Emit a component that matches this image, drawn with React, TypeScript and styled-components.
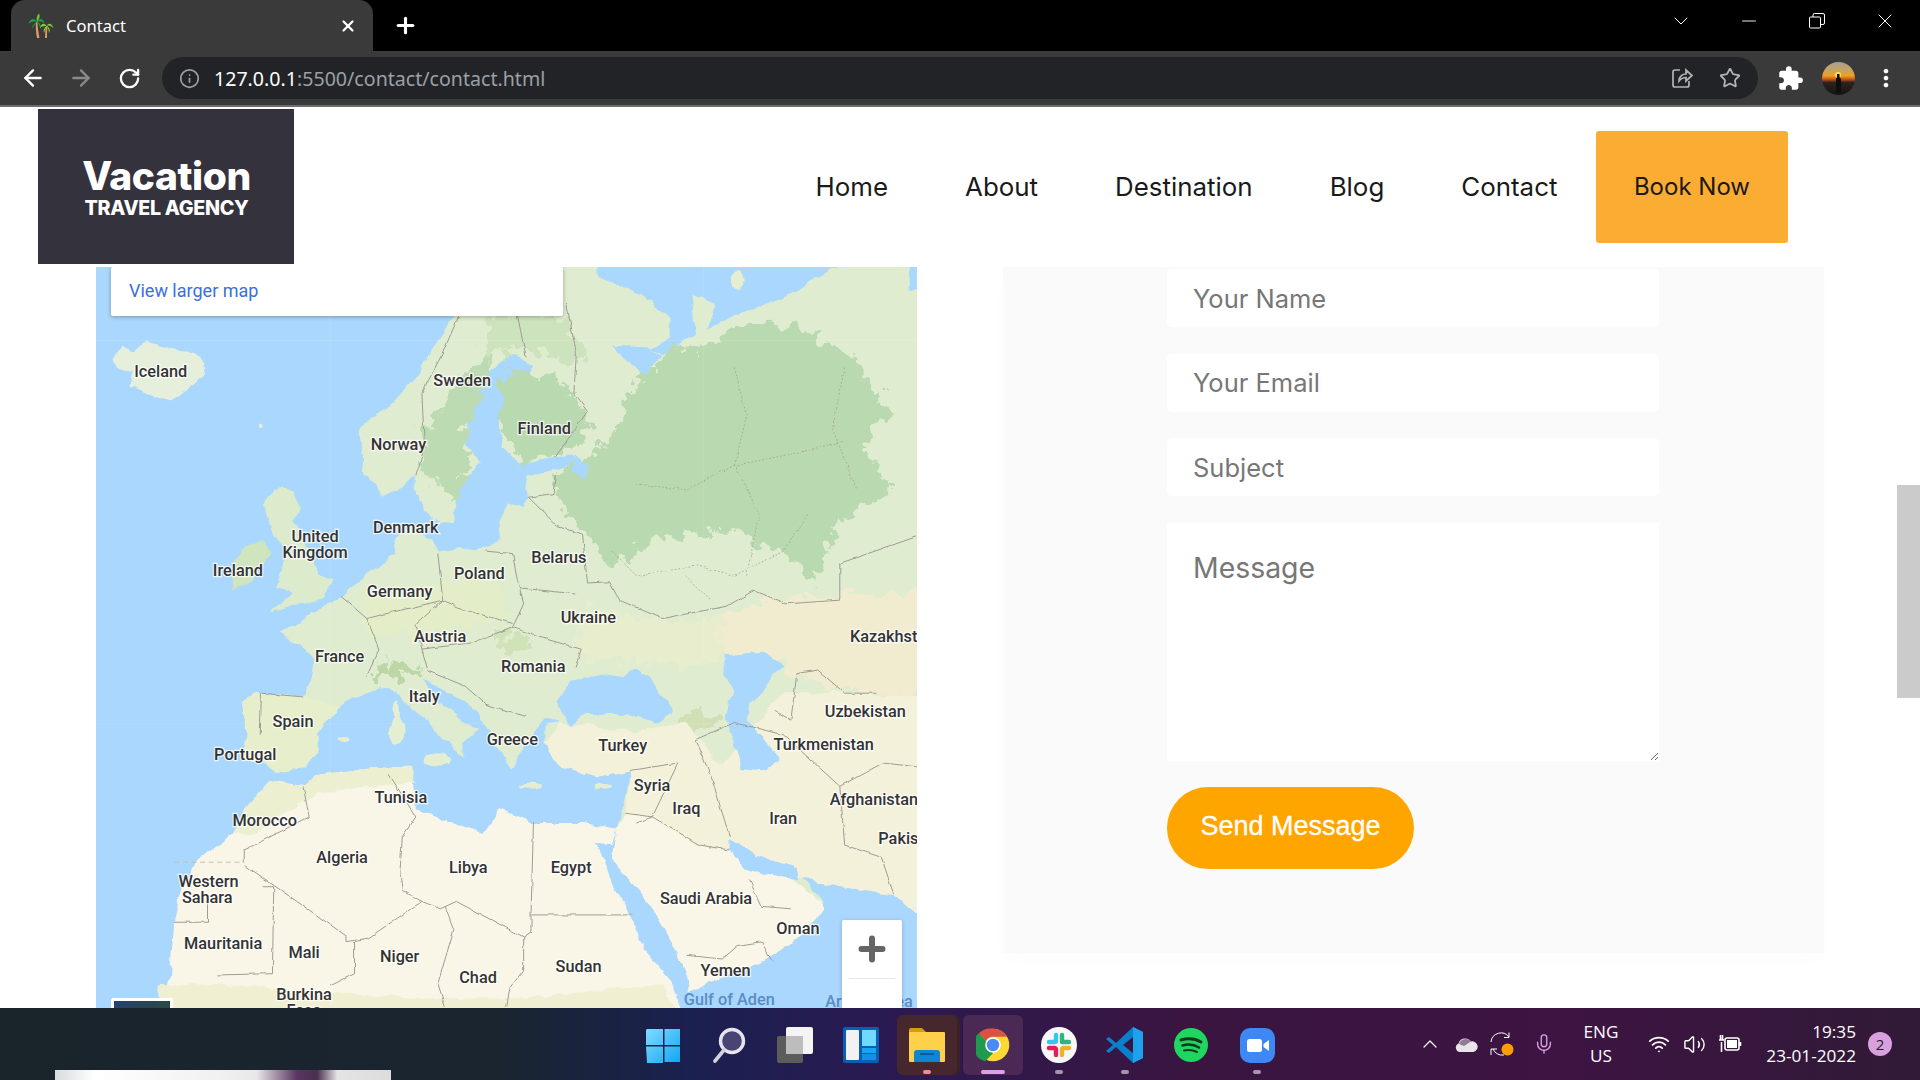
import React from "react";
import styled, { createGlobalStyle } from "styled-components";
import { ArrowLeft, ArrowRight, RotateCw, Info, Star, X, Plus, ChevronDown, ChevronUp, Minus, Mic, Wifi, Volume2 } from "lucide-react";
import { MdExtension, MdMoreVert } from "react-icons/md";

const GlobalStyle = createGlobalStyle`
  html, body {
    margin: 0;
    padding: 0;
    height: 100%;
    overflow: hidden;
    background: #fff;
  }
  * { box-sizing: border-box; }
`;

const Screen = styled.div`
  display: flex;
  flex-direction: column;
  width: 1920px;
  height: 1080px;
  overflow: hidden;
`;

/* browser chrome */
const TabStrip = styled.div`
  display: flex;
  align-items: flex-start;
  height: 51px;
  padding-left: 11px;
  background: #000;
  color: #fff;
`;

const Tab = styled.div`
  display: flex;
  align-items: center;
  width: 362px;
  height: 51px;
  padding: 0 16px 0 17px;
  gap: 12px;
  background: #3a3a3a;
  border-radius: 14px 14px 0 0;
  font: 400 16.6px "Noto Sans", sans-serif;
`;

const TabTitle = styled.span`
  flex: 1;
`;

const NewTab = styled.div`
  display: flex;
  align-items: center;
  height: 51px;
  margin-left: 20px;
`;

const WindowControls = styled.div`
  display: flex;
  margin-left: auto;
  padding-right: 1px;
`;

const WindowButton = styled.div`
  display: flex;
  align-items: center;
  justify-content: center;
  width: 68px;
  height: 42px;
`;

const Toolbar = styled.div`
  display: flex;
  align-items: center;
  height: 56px;
  padding-left: 9px;
  background: #3a3a3a;
  border-bottom: 2px solid #6d6d6d;
  color: #fff;
`;

const ToolButton = styled.div<{ $dim?: boolean }>`
  display: flex;
  align-items: center;
  justify-content: center;
  width: 48px;
  height: 40px;
  color: ${(p) => (p.$dim ? "#8a8a8a" : "#fff")};
`;

const Omnibox = styled.div`
  display: flex;
  align-items: center;
  flex: 0 0 1596px;
  height: 42px;
  margin: 0 8px 0 9px;
  padding: 0 4px 0 17px;
  border-radius: 21px;
  background: #222326;
  color: #9aa0a6;
  font: 400 19.6px "Noto Sans", sans-serif;
`;

const UrlText = styled.span`
  flex: 1;
  margin-left: 14px;
`;

const UrlHost = styled.span`
  color: #fff;
`;

const OmniAction = styled.div`
  display: flex;
  align-items: center;
  justify-content: center;
  width: 48px;
  color: #b4b4b4;
`;

/* page */
const Viewport = styled.div`
  position: relative;
  flex: 1;
  overflow: hidden;
  background: #fff;
`;

const Header = styled.header`
  display: flex;
  align-items: flex-start;
  height: 160px;
  padding: 2px 132px 0 38px;
`;

const Logo = styled.div`
  display: flex;
  flex-direction: column;
  align-items: center;
  justify-content: center;
  width: 256px;
  height: 155px;
  padding: 3px 0 0 1px;
  background: #34323d;
  color: #fff;
  font-family: Inter, sans-serif;
`;

const LogoTitle = styled.div`
  font-size: 39px;
  font-weight: 800;
  line-height: 40px;
  letter-spacing: -0.4px;
`;

const LogoSub = styled.div`
  font-size: 19.7px;
  font-weight: 800;
  line-height: 24px;
  letter-spacing: -0.3px;
`;

const Nav = styled.nav`
  display: flex;
  align-items: center;
  height: 111px;
  margin: 22px 0 0 auto;
  font: 400 25.9px Inter, sans-serif;
  color: #1a1a1a;
`;

const NavLink = styled.a`
  padding: 0 38.5px;
`;

const BookNow = styled.a`
  display: flex;
  align-items: center;
  height: 112px;
  padding: 0 38px;
  border-radius: 3px;
  background: #fbac33;
  font-size: 24px;
`;

const Content = styled.main`
  display: flex;
  align-items: flex-start;
  padding-left: 96px;
`;

const MapFrame = styled.div`
  position: relative;
  flex: 0 0 821px;
  height: 741px;
  overflow: hidden;
  background: #a9d7fe;
`;

const MapSvg = styled.svg`
  display: block;
  width: 821px;
  height: 741px;
`;

const MapLabel = styled.text<{ $sea?: boolean }>`
  font: 500 13.3px Roboto, sans-serif;
  text-anchor: middle;
  dominant-baseline: central;
  fill: ${(p) => (p.$sea ? "#5b8cc4" : "#333")};
  stroke: ${(p) => (p.$sea ? "none" : "rgba(255,255,255,0.8)")};
  stroke-width: 2px;
  paint-order: stroke;
`;

const MapCard = styled.div`
  position: absolute;
  top: 0;
  left: 15px;
  display: flex;
  align-items: center;
  width: 452px;
  height: 49px;
  padding: 0 0 3px 18px;
  border-radius: 2px;
  background: #fff;
  box-shadow: 0 1px 4px rgba(0, 0, 0, 0.3);
  color: #3a6fe0;
  font: 400 18px Roboto, sans-serif;
`;

const ZoomControl = styled.div`
  position: absolute;
  top: 653px;
  right: 15px;
  width: 60px;
  height: 120px;
  border-radius: 2px;
  background: #fff;
  box-shadow: 0 1px 4px rgba(0, 0, 0, 0.2);
  color: #666;
`;

const ZoomPlus = styled.div`
  display: flex;
  align-items: center;
  justify-content: center;
  height: 59px;
  margin: 0 7px;
  border-bottom: 1px solid #e6e6e6;
`;

const LayerThumb = styled.div`
  position: absolute;
  top: 731px;
  left: 15px;
  width: 62px;
  height: 62px;
  border: 3px solid #fff;
  border-radius: 2px;
  background: linear-gradient(100deg, #25406e, #2c4a3c);
`;

const FormPanel = styled.section`
  flex: 0 0 821px;
  height: 686px;
  margin-left: 86px;
  padding: 2px 165px 0 164px;
  background: #fafafa;
  box-shadow: 0 8px 20px rgba(0, 0, 0, 0.01);
`;

const ContactForm = styled.form`
  display: flex;
  flex-direction: column;
  align-items: flex-start;
`;

const TextInput = styled.input`
  width: 100%;
  height: 58px;
  margin-bottom: 26.5px;
  padding: 0 26px;
  border: none;
  border-radius: 5px;
  outline: none;
  background: #fff;
  font: 400 25.5px Inter, sans-serif;
  &::placeholder {
    color: #777;
    opacity: 1;
  }
`;

const MessageInput = styled.textarea`
  display: block;
  width: 100%;
  height: 238px;
  margin-bottom: 26px;
  padding: 27px 26px;
  border: none;
  outline: none;
  background: #fff;
  font: 400 28.4px Inter, sans-serif;
  &::placeholder {
    color: #777;
    opacity: 1;
  }
`;

const SendButton = styled.button`
  width: 247px;
  height: 82px;
  padding-bottom: 3px;
  border: none;
  border-radius: 41px;
  background: #ffa500;
  color: #fff;
  font: 400 27px "Liberation Sans", sans-serif;
  -webkit-text-stroke: 0.3px #fff;
`;

const ScrollThumb = styled.div`
  position: absolute;
  top: 378px;
  right: 0;
  width: 23px;
  height: 213px;
  background: #cbcbcb;
`;

/* windows taskbar */
const Taskbar = styled.footer`
  position: relative;
  display: flex;
  align-items: center;
  height: 72px;
  padding-left: 630px;
  background: linear-gradient(90deg, #19242b 0%, #1a2530 26%, #1a2050 36%, #2a1a52 46%, #3a1540 62%, #3d1442 82%, #301a36 100%);
  color: #fff;
`;

const Webcam = styled.div`
  position: absolute;
  left: 55px;
  bottom: 0;
  width: 336px;
  height: 10px;
  background: linear-gradient(90deg, #d8dcdc 0%, #fff 12%, #f0f0f0 50%, #e8e8e8 60%, #5a3560 72%, #4a3050 78%, #e4e4e4 84%, #dcdcdc 100%);
`;

const TaskSlot = styled.div<{ $bg?: string; $stacked?: boolean }>`
  position: relative;
  display: flex;
  align-items: center;
  justify-content: center;
  width: 60px;
  height: 60px;
  margin: 2px 3px 0;
  border-radius: 6px;
  background: ${(p) => p.$bg || "transparent"};
  box-shadow: ${(p) => (p.$stacked ? "3px 0 0 #3a2326" : "none")};
`;

const RunDot = styled.span<{ $color: string; $wide?: boolean }>`
  position: absolute;
  bottom: 1px;
  left: 50%;
  width: ${(p) => (p.$wide ? "24px" : "8px")};
  height: 4px;
  margin-left: ${(p) => (p.$wide ? "-12px" : "-4px")};
  border-radius: 2px;
  background: ${(p) => p.$color};
`;

const Tray = styled.div`
  display: flex;
  align-items: center;
  height: 100%;
  margin-left: auto;
  padding-right: 28px;
  font: 400 17.2px "Open Sans", sans-serif;
`;

const TrayIcon = styled.div<{ $gap?: number }>`
  display: flex;
  align-items: center;
  justify-content: center;
  width: 24px;
  margin-right: ${(p) => p.$gap ?? 12}px;
`;

const Lang = styled.div`
  width: 46px;
  margin: 0 23px 0 22px;
  text-align: center;
  line-height: 24px;
`;

const Clock = styled.div`
  width: 100px;
  margin-left: 14px;
  text-align: right;
  line-height: 24px;
`;

const Badge = styled.div`
  display: flex;
  align-items: center;
  justify-content: center;
  width: 24px;
  height: 24px;
  margin-left: 12px;
  border-radius: 50%;
  background: #d9a0e0;
  color: #222;
  font-size: 15px;
`;

/* map data, in the coordinates of the viewBox */
const eurasia =
  "M400,240 L458,205 489,205 489,226 524,240 548,259 548,275 533,284 540,290 555,280 568,275 565,240 585,248 577,270 598,259 642,242 681,219 743,210 743,237 765,231 765,760 730,730 686,724 655,716 675,742 646,770 620,787 568,807 562,811 561,798 550,770 528,735 500,700 504,675 511,653 515,629 489,634 458,626 445,607 445,595 458,588 445,588 428,610 419,629 397,593 380,572 345,555 353,569 392,597 378,606 378,618 362,604 336,576 318,563 310,562 288,569 279,577 259,599 262,612 248,626 224,633 213,621 199,621 202,599 198,574 209,566 248,569 251,566 257,539 253,534 229,517 248,505 279,487 297,471 312,460 325,452 323,438 335,430 353,440 358,452 397,446 410,441 408,427 415,411 428,414 432,389 454,384 476,378 467,373 454,373 423,378 410,365 408,340 423,313 436,299 419,289 401,302 384,329 380,359 393,378 375,397 371,427 353,425 340,403 340,389 331,397 314,406 297,387 294,348 318,332 340,308 358,278 371,258 Z";
const africa =
  "M222,637 L248,642 257,634 305,627 336,626 340,661 371,672 395,682 410,661 437,672 476,672 500,676 504,675 500,690 487,689 504,730 520,757 528,776 548,800 561,835 130,835 139,800 143,751 148,730 161,702 192,680 200,662 Z";
const greatBritain = "M224,398 240,400 246,414 240,425 250,445 262,468 272,474 266,487 222,500 240,485 226,479 235,452 222,433 216,411 Z";
const ireland = "M200,446 216,441 222,453 205,474 189,482 192,457 Z";
const iceland = "M93,292 100,283 108,287 120,280 145,285 165,292 168,305 155,318 140,327 125,322 108,315 110,305 95,300 Z";
const russiaForest =
  "M610,262 650,268 700,290 726,335 706,365 728,403 684,428 664,476 646,456 598,432 528,442 502,462 462,418 452,387 480,372 505,350 512,322 545,288 585,280 Z";
const swedenForest = "M345,360 365,325 385,300 395,290 410,270 395,320 380,350 385,375 370,410 355,395 345,380 Z";
const finlandForest = "M412,302 450,305 474,328 482,350 462,370 425,378 408,345 Z";
const norwayForest = "M400,258 440,258 465,262 480,290 470,300 440,285 415,285 395,295 Z";
const steppe = "M590,505 616,490 695,485 765,482 765,570 690,566 640,545 590,535 Z";
const southSteppe = "M480,495 530,505 590,505 590,535 560,545 520,540 470,535 Z";
const centralEurope = "M290,490 340,478 400,470 420,500 380,512 330,520 300,515 Z";
const middleEast =
  "M445,607 458,590 520,597 560,590 590,625 640,565 690,566 765,570 765,760 730,730 686,724 655,716 625,713 596,694 572,690 533,667 511,664 515,629 489,634 458,626 Z";
const arabia = "M511,664 533,667 572,690 596,694 625,713 646,716 675,742 646,770 620,787 568,807 562,811 561,798 550,770 528,735 500,700 504,675 Z";
const iberia = "M198,574 209,566 248,569 279,577 259,599 262,612 248,626 224,633 213,621 199,621 202,599 Z";
const sahel = "M130,806 180,803 230,808 290,812 350,815 420,815 480,810 540,804 561,835 130,835 Z";
const maghreb = "M200,662 222,637 248,642 257,634 305,627 336,626 340,640 300,642 262,646 235,662 205,682 192,680 Z";
const blackSea = "M454,574 467,555 493,550 510,553 520,545 533,556 550,580 537,591 511,583 480,583 467,591 Z";
const caspian = "M592,535 625,532 640,545 625,560 612,575 610,590 622,600 636,620 625,630 605,628 600,605 592,585 600,565 592,550 Z";
const persianGulf = "M596,685 616,698 651,709 653,719 625,713 607,708 596,694 Z";
const whiteSea = "M500,282 533,284 540,292 528,306 515,296 Z";
const lakes = "M470,372 482,380 478,392 468,385 Z";

const islands: [number, number, number, number][] = [
  [324, 597, 6, 11],
  [324, 580, 3, 7],
  [358, 620, 10, 5],
  [434, 642, 9, 2],
  [493, 642, 7, 2],
  [281, 603, 4, 2],
  [603, 229, 6, 6],
  [213, 347, 2, 2],
];

const borders = [
  "M375,258 362,288 345,321 347,365 340,389",
  "M423,258 430,291",
  "M463,248 471,288 469,321 480,336 454,373",
  "M454,386 452,403 432,406 456,430 476,436 480,476 498,475 506,490 541,505 594,495 616,482 642,493 686,490 686,460 749,438",
  "M397,450 419,452 423,474 428,493 419,512",
  "M358,452 362,490 380,498 419,509",
  "M425,480 471,485",
  "M362,490 340,510 345,530 385,525 419,512",
  "M279,487 300,505 320,500 362,490",
  "M419,512 440,520 475,530 470,545",
  "M300,505 310,530 300,552",
  "M345,530 350,548 380,560 397,575 430,585",
  "M248,569 214,566 213,600",
  "M248,642 253,667 200,694 200,704",
  "M200,706 283,764 283,769 301,766 345,736 329,727 327,713 329,683 340,667 318,632",
  "M436,672 434,747 434,761 428,765 373,736 360,742 345,736",
  "M434,747 517,747",
  "M364,740 371,759 358,803 364,822",
  "M428,765 428,792 417,806 414,822",
  "M215,724 224,724 223,795 178,796",
  "M290,769 290,795 270,805",
  "M170,735 170,753 143,753",
  "M515,629 554,623 533,667 511,664",
  "M520,672 533,667 572,690 596,694",
  "M568,604 581,634 596,683",
  "M646,742 622,740 612,718",
  "M561,780 590,783 603,772 622,769 631,785",
  "M633,580 646,588 651,550 668,547 690,566 716,566",
  "M568,604 600,590 640,600 686,642 721,623 749,626",
  "M686,642 690,690 720,700 730,730",
];

const dottedBorders = [
  "M500,450 520,470 570,462 600,470 640,450 660,420",
  "M520,395 560,400 600,380 650,370 690,360",
  "M600,300 610,340 600,380 620,420 610,470",
  "M690,300 680,350 700,400",
  "M560,470 580,490",
];

const labels: [string, number, number, boolean?][] = [
  ["Iceland", 131, 303],
  ["Sweden", 377, 311],
  ["Norway", 325, 363],
  ["Finland", 444, 350],
  ["United", 257, 438],
  ["Kingdom", 257, 451],
  ["Denmark", 331, 431],
  ["Ireland", 194, 466],
  ["Belarus", 456, 455],
  ["Poland", 391, 468],
  ["Germany", 326, 483],
  ["Ukraine", 480, 504],
  ["Austria", 359, 520],
  ["France", 277, 536],
  ["Romania", 435, 544],
  ["Kazakhst", 721, 520],
  ["Italy", 346, 569],
  ["Uzbekistan", 706, 581],
  ["Spain", 239, 589],
  ["Greece", 418, 604],
  ["Turkey", 508, 609],
  ["Turkmenistan", 672, 608],
  ["Portugal", 200, 616],
  ["Syria", 532, 641],
  ["Iraq", 560, 660],
  ["Tunisia", 327, 651],
  ["Iran", 639, 668],
  ["Morocco", 216, 670],
  ["Afghanistan", 713, 653],
  ["Pakis", 733, 685],
  ["Algeria", 279, 700],
  ["Libya", 382, 708],
  ["Egypt", 466, 708],
  ["Western", 170, 720],
  ["Sahara", 169, 733],
  ["Saudi Arabia", 576, 734],
  ["Oman", 651, 758],
  ["Mauritania", 182, 770],
  ["Mali", 248, 778],
  ["Niger", 326, 781],
  ["Chad", 390, 798],
  ["Sudan", 472, 789],
  ["Yemen", 592, 792],
  ["Burkina", 248, 812],
  ["Faso", 248, 825],
  ["Gulf of Aden", 595, 816, true],
  ["Arabian Sea", 709, 818, true],
];

const EuropeMap = () => (
  <MapSvg viewBox="79 218 670 605" preserveAspectRatio="none">
    <defs>
      <filter id="coast" x="-5%" y="-5%" width="110%" height="110%">
        <feTurbulence type="fractalNoise" baseFrequency="0.07" numOctaves="3" seed="4" />
        <feDisplacementMap in="SourceGraphic" scale="7" xChannelSelector="R" yChannelSelector="G" />
      </filter>
      <filter id="forest" x="-10%" y="-10%" width="120%" height="120%">
        <feTurbulence type="fractalNoise" baseFrequency="0.09" numOctaves="4" seed="9" />
        <feDisplacementMap in="SourceGraphic" scale="24" xChannelSelector="G" yChannelSelector="R" />
      </filter>
      <filter id="wobble" x="-5%" y="-5%" width="110%" height="110%">
        <feTurbulence type="fractalNoise" baseFrequency="0.12" numOctaves="2" seed="2" />
        <feDisplacementMap in="SourceGraphic" scale="3" xChannelSelector="R" yChannelSelector="G" />
      </filter>
    </defs>
    <rect x="79" y="218" width="670" height="605" fill="#a9d7fe" />
    <g filter="url(#coast)">
      <path d={eurasia} fill="#dfecd0" />
      <path d={greatBritain} fill="#dcebcb" />
      <path d={ireland} fill="#cfe5bd" />
      <path d={iceland} fill="#e6efdc" />
      {islands.map(([cx, cy, rx, ry]) => (
        <ellipse key={`${cx}-${cy}`} cx={cx} cy={cy} rx={rx} ry={ry} fill="#e6eed2" />
      ))}
    </g>
    <g filter="url(#forest)">
      <path d={russiaForest} fill="#b9d9b1" />
      <path d={swedenForest} fill="#bcdbb3" />
      <path d={finlandForest} fill="#b9d9b1" />
      <path d={norwayForest} fill="#cde3bd" />
      <path d={southSteppe} fill="#e8eecd" />
      <path d={centralEurope} fill="#e3edc8" />
      <path d={steppe} fill="#f1ebcf" />
      <ellipse cx="325" cy="547" rx="20" ry="6" fill="#bcd6a6" />
      <ellipse cx="420" cy="525" rx="16" ry="6" fill="#cfe2b8" />
      <ellipse cx="570" cy="590" rx="18" ry="7" fill="#cfe0b4" />
    </g>
    <g filter="url(#coast)">
      <path d={middleEast} fill="#f4f1da" />
      <path d={iberia} fill="#e6eecb" />
      <path d={africa} fill="#f9f6e8" />
      <path d={maghreb} fill="#ecefd0" />
      <path d={sahel} fill="#f0efd2" />
      <path d={arabia} fill="#f9f6e8" />
      <path d={blackSea} fill="#a9d7fe" />
      <path d={caspian} fill="#a9d7fe" />
      <path d={persianGulf} fill="#a9d7fe" />
      <path d={whiteSea} fill="#a9d7fe" />
      <path d={lakes} fill="#a9d7fe" />
    </g>
    <path d="M79,278 H749 M79,591 H749 M270,218 V823 M575,218 V823" stroke="#fff" strokeOpacity="0.14" strokeWidth="0.7" />
    <g fill="none" stroke="#9c9a8f" strokeWidth="0.8" filter="url(#wobble)">
      {borders.map((d) => (
        <path key={d} d={d} />
      ))}
      {dottedBorders.map((d) => (
        <path key={d} d={d} strokeDasharray="1.5 1.5" strokeOpacity="0.7" />
      ))}
    </g>
    <path d="M143,704 H200" stroke="#c3bfae" strokeDasharray="4 3" strokeWidth="0.8" fill="none" />
    <g transform="translate(0.8 0)">
      {labels.map(([name, x, y, sea]) => (
        <MapLabel key={name} x={x} y={y} $sea={sea}>
          {name}
        </MapLabel>
      ))}
    </g>
  </MapSvg>
);

/* small drawings */
const Palm = () => (
  <svg width="26" height="26" viewBox="0 0 26 26">
    <path d="M8 9 C7.5 14 8 20 9 25 L11.5 25 C10.5 20 9.5 14 9.5 9 Z" fill="#e8985a" />
    <path d="M18 13 C17.5 17 17 21 17 25 L19 25 C19 21 19 17 19.5 13 Z" fill="#e8985a" />
    <path d="M9 9 C6 4 2 6 0.5 11 C3 8.5 6 8 9 9 C6 10 4 13 4 16 C6 12 8 11 9 9 C11 11 12 13 12 16 C14 13 12 10 9 9 C12 8 14.5 8.5 16.5 10.5 C15.5 6 12 4 9 9 Z" fill="#1f9d4a" />
    <path d="M9 9 C8 5 9 2 11 0.5 C12.5 3 11.5 6 9 9 Z" fill="#5dc83c" />
    <path d="M18.5 13 C16 9 13 11 12 15 C14 13 16 13 18.5 13 C16 15 15 17 16 20 C17 17 18 15 18.5 13 C20 15 21 17 21 20 C23 17 21 14 18.5 13 C21 12 23 13 25.5 15 C24 11 21 9 18.5 13 Z" fill="#7fcf3a" />
  </svg>
);

const ShareBox = () => (
  <svg width="22" height="22" viewBox="0 0 22 22" fill="none" stroke="currentColor" strokeWidth="1.7">
    <path d="M9 3 H4 A2 2 0 0 0 2 5 V18 A2 2 0 0 0 4 20 H16 A2 2 0 0 0 18 18 V14" />
    <path d="M8 14 C8 9 12 7 15 7 V3 L21 8.5 L15 14 V10.5 C12 10.5 10 11.5 8 14 Z" />
  </svg>
);

const Restore = () => (
  <svg width="16" height="16" viewBox="0 0 16 16" fill="none" stroke="#fff" strokeWidth="1">
    <rect x="0.5" y="4" width="11" height="11" rx="1" />
    <path d="M4 4 V2 A1.5 1.5 0 0 1 5.5 0.5 H14 A1.5 1.5 0 0 1 15.5 2 V10 A1.5 1.5 0 0 1 14 11.5 H11.5" />
  </svg>
);

const Sunset = () => (
  <svg width="33" height="33" viewBox="0 0 33 33">
    <defs>
      <linearGradient id="dusk" x1="0" y1="0" x2="0" y2="1">
        <stop offset="0" stopColor="#a9a08c" />
        <stop offset="0.28" stopColor="#c9a45c" />
        <stop offset="0.42" stopColor="#f4a018" />
        <stop offset="0.54" stopColor="#b5481a" />
        <stop offset="0.62" stopColor="#2a2420" />
        <stop offset="1" stopColor="#141412" />
      </linearGradient>
    </defs>
    <circle cx="16.5" cy="16.5" r="16.5" fill="url(#dusk)" />
    <circle cx="16" cy="13" r="3" fill="#ffe14a" />
    <path d="M15 12 H17.5 V15 L19 17 V31 H14 V17 L15 15 Z" fill="#0d0d0d" />
  </svg>
);

const WindowsLogo = () => (
  <svg width="35" height="35" viewBox="0 0 35 35">
    <defs>
      <linearGradient id="win" x1="0" y1="0" x2="1" y2="1">
        <stop offset="0" stopColor="#7fdcff" />
        <stop offset="1" stopColor="#13a5f2" />
      </linearGradient>
    </defs>
    <path d="M1 1 H17 V17 H0 V2 Z M18.5 1 H34 V17 H18.5 Z M0 18.5 H17 V35 H1 Z M18.5 18.5 H34 V34 H18.5 Z" fill="url(#win)" />
  </svg>
);

const SearchGlyph = () => (
  <svg width="34" height="36" viewBox="0 0 34 36" fill="none">
    <circle cx="20" cy="14" r="11.5" fill="#4a4474" stroke="#e8e4ee" strokeWidth="3.4" />
    <path d="M12 23 L3 34" stroke="#d4d0dc" strokeWidth="3.6" strokeLinecap="round" />
  </svg>
);

const TaskView = () => (
  <svg width="36" height="36" viewBox="0 0 36 36">
    <rect x="0" y="9" width="26" height="27" rx="2" fill="#5c5c5c" />
    <rect x="9" y="0" width="27" height="27" rx="2" fill="#f4f4f4" />
    <rect x="9" y="9" width="17" height="18" fill="#bdbdbd" />
  </svg>
);

const Widgets = () => (
  <svg width="36" height="36" viewBox="0 0 36 36">
    <rect width="36" height="36" rx="2" fill="#0c5db4" />
    <rect x="3" y="3" width="13" height="30" rx="1" fill="#f2f2f2" />
    <rect x="19" y="3" width="14" height="16" fill="#6fd9ff" />
    <rect x="19" y="21" width="14" height="5" fill="#18a4f4" />
    <rect x="19" y="27" width="14" height="6" fill="#1390e4" />
  </svg>
);

const Explorer = () => (
  <svg width="38" height="36" viewBox="0 0 38 36">
    <path d="M1 3 A2 2 0 0 1 3 1 H14 L18 5 H36 V12 H1 Z" fill="#d89c12" />
    <rect x="1" y="5" width="36" height="30" rx="1" fill="#ffd04a" />
    <path d="M6 35 V26 A3 3 0 0 1 9 23 H29 A3 3 0 0 1 32 26 V35 Z" fill="#0f86d2" />
    <rect x="12" y="26" width="14" height="2" fill="#0b5a9c" />
  </svg>
);

const ChromeLogo = () => (
  <svg width="34" height="34" viewBox="0 0 48 48">
    <circle cx="24" cy="24" r="23" fill="#fdd835" />
    <path d="M24 1 A23 23 0 0 1 44 12.5 H24 A11.5 11.5 0 0 0 14 18 L4 7.5 A23 23 0 0 1 24 1 Z" fill="#dd5144" />
    <path d="M4 7.5 L14 18 L24 35.5 L13 47 A23 23 0 0 1 4 7.5 Z" fill="#1f9a4f" />
    <circle cx="24" cy="24" r="11" fill="#fff" />
    <circle cx="24" cy="24" r="8.8" fill="#4a8af4" />
  </svg>
);

const SlackLogo = () => (
  <svg width="36" height="36" viewBox="0 0 36 36">
    <circle cx="18" cy="18" r="18" fill="#f8f8f8" />
    <g strokeWidth="4.4" strokeLinecap="round" fill="none">
      <path d="M15 8 V14.5 M8 15 H14" stroke="#36c5f0" />
      <path d="M21 8 V15 M28 15 H22" stroke="#2eb67d" />
      <path d="M22 21 H28 M21 22 V28" stroke="#ecb22e" />
      <path d="M15 22 V28 M8 21 H14" stroke="#e01e5a" />
    </g>
  </svg>
);

const VSCode = () => (
  <svg width="38" height="38" viewBox="0 0 38 38">
    <path d="M27 1 L37 6 V32 L27 37 L10 21 L3 27 L0 25 L7 19 L0 13 L3 11 L10 17 Z M27 11 L17 19 L27 27 Z" fill="#0a7fcc" />
    <path d="M27 1 L37 6 V32 L27 37 Z" fill="#1fa1ee" />
  </svg>
);

const Spotify = () => (
  <svg width="34" height="34" viewBox="0 0 34 34" fill="none">
    <circle cx="17" cy="17" r="17" fill="#1ed760" />
    <g stroke="#14361f" strokeLinecap="round">
      <path d="M7 12 C14 10 21 10.5 27 14" strokeWidth="3" />
      <path d="M8.5 17.5 C14 16 20 16.5 25 19.5" strokeWidth="2.5" />
      <path d="M10 22.5 C14 21.5 19 22 23 24" strokeWidth="2" />
    </g>
  </svg>
);

const ZoomApp = () => (
  <svg width="35" height="35" viewBox="0 0 35 35">
    <rect width="35" height="35" rx="10" fill="#3d88f5" />
    <rect x="7" y="11" width="15" height="13" rx="2.5" fill="#fff" />
    <path d="M23.5 16 L29 12 V23 L23.5 19 Z" fill="#fff" />
  </svg>
);

const CloudGlyph = () => (
  <svg width="24" height="16" viewBox="0 0 24 16">
    <path d="M6 16 A4.5 4.5 0 0 1 4.5 7.4 A7 7 0 0 1 17 5.5 A5 5 0 0 1 19.5 16 Z" fill="#e8e4ea" />
    <path d="M5 8 A7 7 0 0 1 17 5.5 L10 10 Z" fill="#8d7c94" />
  </svg>
);

const SyncGlyph = () => (
  <svg width="24" height="24" viewBox="0 0 24 24" fill="none" stroke="#fff" strokeWidth="1">
    <path d="M1 10 A10 10 0 0 1 19 5 M19 0.5 V5.5 H14" />
    <path d="M14 23 A10 10 0 0 1 3 17 M1 23 V17 H7" />
    <circle cx="17.5" cy="17.5" r="6" fill="#ff9d00" stroke="none" />
  </svg>
);

const BatteryGlyph = () => (
  <svg width="24" height="24" viewBox="0 0 24 24" fill="none" stroke="#fff" strokeWidth="1.6">
    <rect x="7" y="6" width="14" height="12" rx="2" />
    <rect x="9" y="8" width="10" height="8" fill="#fff" stroke="none" />
    <path d="M22 10 V14" strokeWidth="2.6" />
    <path d="M1 8 H6 M2.5 3 V8 M4.5 3 V8 M3.5 10 V20" />
  </svg>
);

const App: React.FC = () => {
  return (
    <Screen>
      <GlobalStyle />
      <TabStrip>
        <Tab>
          <Palm />
          <TabTitle>Contact</TabTitle>
          <X size={18} strokeWidth={3} />
        </Tab>
        <NewTab>
          <Plus size={25} strokeWidth={3} />
        </NewTab>
        <WindowControls>
          <WindowButton>
            <ChevronDown size={24} strokeWidth={1} />
          </WindowButton>
          <WindowButton>
            <Minus size={22} strokeWidth={1} />
          </WindowButton>
          <WindowButton>
            <Restore />
          </WindowButton>
          <WindowButton>
            <X size={24} strokeWidth={1} />
          </WindowButton>
        </WindowControls>
      </TabStrip>

      <Toolbar>
        <ToolButton>
          <ArrowLeft size={26} strokeWidth={2.2} />
        </ToolButton>
        <ToolButton $dim>
          <ArrowRight size={26} strokeWidth={2.2} />
        </ToolButton>
        <ToolButton>
          <RotateCw size={23} strokeWidth={2.4} />
        </ToolButton>
        <Omnibox>
          <Info size={21} />
          <UrlText>
            <UrlHost>127.0.0.1</UrlHost>:5500/contact/contact.html
          </UrlText>
          <OmniAction>
            <ShareBox />
          </OmniAction>
          <OmniAction>
            <Star size={22} strokeWidth={2} />
          </OmniAction>
        </Omnibox>
        <ToolButton>
          <MdExtension size={27} />
        </ToolButton>
        <ToolButton>
          <Sunset />
        </ToolButton>
        <ToolButton>
          <MdMoreVert size={28} />
        </ToolButton>
      </Toolbar>

      <Viewport>
        <Header>
          <Logo>
            <LogoTitle>Vacation</LogoTitle>
            <LogoSub>TRAVEL AGENCY</LogoSub>
          </Logo>
          <Nav>
            <NavLink>Home</NavLink>
            <NavLink>About</NavLink>
            <NavLink>Destination</NavLink>
            <NavLink>Blog</NavLink>
            <NavLink>Contact</NavLink>
            <BookNow>Book Now</BookNow>
          </Nav>
        </Header>
        <Content>
          <MapFrame>
            <EuropeMap />
            <MapCard>View larger map</MapCard>
            <ZoomControl>
              <ZoomPlus>
                <Plus size={36} strokeWidth={4} />
              </ZoomPlus>
            </ZoomControl>
            <LayerThumb />
          </MapFrame>
          <FormPanel>
            <ContactForm>
              <TextInput placeholder="Your Name" />
              <TextInput placeholder="Your Email" />
              <TextInput placeholder="Subject" />
              <MessageInput placeholder="Message" />
              <SendButton type="button">Send Message</SendButton>
            </ContactForm>
          </FormPanel>
        </Content>
        <ScrollThumb />
      </Viewport>

      <Taskbar>
        <Webcam />
        <TaskSlot>
          <WindowsLogo />
        </TaskSlot>
        <TaskSlot>
          <SearchGlyph />
        </TaskSlot>
        <TaskSlot>
          <TaskView />
        </TaskSlot>
        <TaskSlot>
          <Widgets />
        </TaskSlot>
        <TaskSlot $bg="#46272e" $stacked>
          <Explorer />
          <RunDot $color="#f58a9a" />
        </TaskSlot>
        <TaskSlot $bg="#4a2a55">
          <ChromeLogo />
          <RunDot $color="#dca0e6" $wide />
        </TaskSlot>
        <TaskSlot>
          <SlackLogo />
          <RunDot $color="#a893ac" />
        </TaskSlot>
        <TaskSlot>
          <VSCode />
          <RunDot $color="#a893ac" />
        </TaskSlot>
        <TaskSlot>
          <Spotify />
        </TaskSlot>
        <TaskSlot>
          <ZoomApp />
          <RunDot $color="#a893ac" />
        </TaskSlot>
        <Tray>
          <TrayIcon>
            <ChevronUp size={24} strokeWidth={1.2} />
          </TrayIcon>
          <TrayIcon>
            <CloudGlyph />
          </TrayIcon>
          <TrayIcon $gap={18}>
            <SyncGlyph />
          </TrayIcon>
          <TrayIcon $gap={0}>
            <Mic size={22} strokeWidth={1.5} color="#d9a0e0" />
          </TrayIcon>
          <Lang>
            ENG
            <br />
            US
          </Lang>
          <TrayIcon $gap={11}>
            <Wifi size={22} strokeWidth={2} />
          </TrayIcon>
          <TrayIcon>
            <Volume2 size={23} strokeWidth={1.5} />
          </TrayIcon>
          <TrayIcon $gap={0}>
            <BatteryGlyph />
          </TrayIcon>
          <Clock>
            19:35
            <br />
            23-01-2022
          </Clock>
          <Badge>2</Badge>
        </Tray>
      </Taskbar>
    </Screen>
  );
};

export default App;
